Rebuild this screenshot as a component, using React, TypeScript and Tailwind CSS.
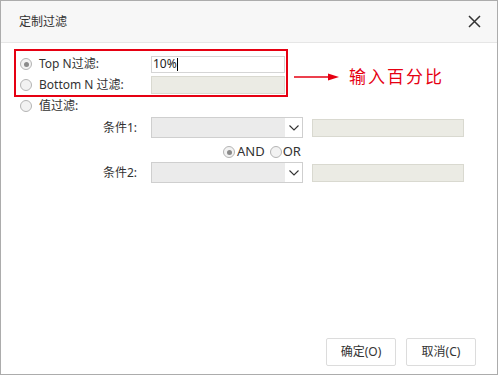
import React from "react";

const font = { fontFamily: '"Noto Sans", "Noto Sans CJK SC", sans-serif' };

function Radio({ checked }: { checked?: boolean }) {
  return (
    <span className="w-[12px] h-[12px] rounded-full border border-[#b4b4b4] bg-[#f2f2f2] flex items-center justify-center shrink-0">
      {checked && <span className="w-[5px] h-[5px] rounded-full bg-[#8a8a8a]" />}
    </span>
  );
}

function Select() {
  return (
    <div className="w-[152px] h-[21px] border border-[#cfcfcf] bg-[#ebebeb] flex justify-end">
      <div className="w-[17px] h-full bg-white flex items-center justify-center">
        <svg width="10" height="6" viewBox="0 0 10 6">
          <path d="M0.5 0.5 L5 5 L9.5 0.5" fill="none" stroke="#333" strokeWidth="1.1" />
        </svg>
      </div>
    </div>
  );
}

export default function App() {
  return (
    <div
      className="w-[498px] h-[375px] border border-[#acacac] bg-white flex flex-col relative text-[12px] text-[#333]"
      style={font}
    >
      <div className="h-[42px] bg-[#f7f7f7] border-b border-[#e6e6e6] flex items-center justify-between pl-[18px] pr-[16px] shrink-0">
        <span className="text-[12px] text-[#333]">定制过滤</span>
        <svg width="13" height="13" viewBox="0 0 13 13">
          <path d="M1 1 L12 12 M12 1 L1 12" stroke="#333" strokeWidth="1.5" />
        </svg>
      </div>
      <div className="flex-1 flex flex-col pt-[6px]">
        <div className="ml-[13px] w-[274px] h-[48px] border-2 border-[#e60012] flex flex-col pt-[4px] gap-[3px]">
          <div className="h-[18px] flex items-center pl-[4px]">
            <Radio checked />
            <span className="ml-[7px] w-[112px]">Top N过滤:</span>
            <div className="w-[134px] h-[17px] border border-[#d5d5d5] bg-white flex items-center pl-[1px] text-[12px] text-[#222]">
              10%<span className="w-[1px] h-[13px] bg-black" />
            </div>
          </div>
          <div className="h-[18px] flex items-center pl-[4px]">
            <Radio />
            <span className="ml-[7px] w-[112px]">Bottom N 过滤:</span>
            <div className="w-[134px] h-[18px] border border-[#d9d9d0] bg-[#ebebe4]" />
          </div>
        </div>
        <div className="h-[14px] flex items-center pl-[19px] mt-[2px]">
          <Radio />
          <span className="ml-[7px]">值过滤:</span>
        </div>
        <div className="flex items-center mt-[4px] h-[21px]">
          <span className="ml-[102px] w-[48px]">条件1:</span>
          <Select />
          <div className="ml-[9px] w-[152px] h-[18px] border border-[#d9d9d0] bg-[#ebebe4]" />
        </div>
        <div className="flex items-center h-[24px] pt-[4px] pl-[222px]">
          <Radio checked />
          <span className="ml-[2px] text-[13px] text-[#333]">AND</span>
          <span className="ml-[5px]" />
          <Radio />
          <span className="ml-[1px] text-[13px] text-[#333]">OR</span>
        </div>
        <div className="flex items-center h-[21px]">
          <span className="ml-[102px] w-[48px]">条件2:</span>
          <Select />
          <div className="ml-[9px] w-[152px] h-[18px] border border-[#d9d9d0] bg-[#ebebe4]" />
        </div>
      </div>
      <div className="flex justify-end gap-[10px] pr-[21px] pb-[8px] shrink-0">
        <button className="w-[70px] h-[28px] border border-[#dcdcdc] rounded-[2px] bg-white text-[12px] text-[#333]">
          确定(O)
        </button>
        <button className="w-[70px] h-[28px] border border-[#dcdcdc] rounded-[2px] bg-white text-[12px] text-[#333]">
          取消(C)
        </button>
      </div>
      <div className="absolute left-[292px] top-[63px] flex items-center">
        <svg width="48" height="24" viewBox="0 0 48 24">
          <path d="M1 12 L38 12" stroke="#e60012" strokeWidth="1.6" />
          <path d="M35 8.5 L46 12 L35 15.5 Z" fill="#e60012" />
        </svg>
        <span className="ml-[8px] text-[17px] text-[#e60012] tracking-[2px]">输入百分比</span>
      </div>
    </div>
  );
}
